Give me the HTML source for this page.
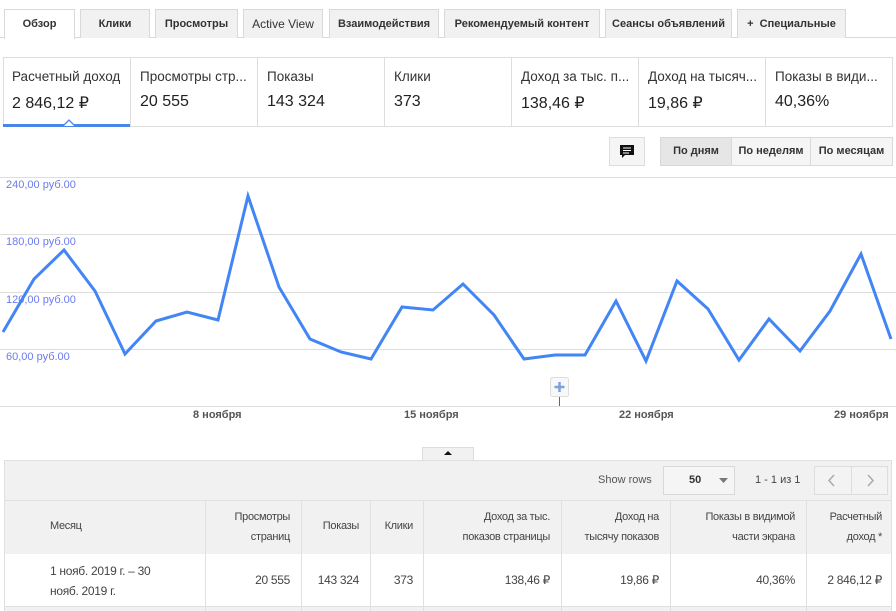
<!DOCTYPE html>
<html><head><meta charset="utf-8"><style>
*{box-sizing:border-box;margin:0;padding:0}
body{width:896px;height:611px;overflow:hidden;background:#fff;font-family:"Liberation Sans",sans-serif;color:#333;position:relative}
.a{position:absolute}
.tab{position:absolute;top:9px;height:29px;background:#f1f1f1;border:1px solid #d9d9d9;border-bottom:none;font-size:11px;font-weight:bold;color:#333;text-align:center;line-height:28px;white-space:nowrap}
.card{position:absolute;top:57px;height:70px;border-left:1px solid #ddd}
.card .l{position:absolute;left:9px;top:12px;font-size:13.5px;color:#333;white-space:nowrap}
.card .v{position:absolute;left:9px;top:36px;font-size:16px;color:#222}
.seg{position:absolute;top:137px;height:29px;border:1px solid #d9d9d9;font-size:11px;font-weight:bold;line-height:27px;text-align:center;background:#f5f5f5}
.gl{position:absolute;left:0;width:896px;height:1px;background:#ddd}
.yl{position:absolute;left:6px;font-size:11px;color:#6b7bf0}
.xl{position:absolute;top:409px;font-size:11px;font-weight:bold;color:#555}
.th,.td{position:absolute;font-size:11px;color:#444;text-align:right;line-height:20px;letter-spacing:-0.3px}
.vb{position:absolute;width:1px;background:#e0e0e0;top:500px;height:111px}
</style></head><body>
<div class="a" style="left:0;top:37px;width:896px;height:1px;background:#d9d9d9"></div>
<div class="tab" style="left:4px;width:71px;background:#fff;height:30px">Обзор</div>
<div class="tab" style="left:80px;width:70px">Клики</div>
<div class="tab" style="left:155px;width:83px">Просмотры</div>
<div class="tab" style="left:243px;width:80px;font-weight:normal;font-size:12px">Active View</div>
<div class="tab" style="left:329px;width:110px">Взаимодействия</div>
<div class="tab" style="left:444px;width:156px">Рекомендуемый контент</div>
<div class="tab" style="left:605px;width:127px">Сеансы объявлений</div>
<div class="tab" style="left:737px;width:109px">+&nbsp; Специальные</div>

<div class="a" style="left:3px;top:57px;width:890px;height:70px;border:1px solid #ddd"></div>
<div class="card" style="left:3px;width:127px;border-left:none"><div class="l">Расчетный доход</div><div class="v">2 846,12 ₽</div></div>
<div class="card" style="left:130px;width:127px"><div class="l">Просмотры стр...</div><div class="v">20 555</div></div>
<div class="card" style="left:257px;width:127px"><div class="l">Показы</div><div class="v">143 324</div></div>
<div class="card" style="left:384px;width:127px"><div class="l">Клики</div><div class="v">373</div></div>
<div class="card" style="left:511px;width:127px"><div class="l">Доход за тыс. п...</div><div class="v">138,46 ₽</div></div>
<div class="card" style="left:638px;width:127px"><div class="l">Доход на тысяч...</div><div class="v">19,86 ₽</div></div>
<div class="card" style="left:765px;width:127px"><div class="l">Показы в види...</div><div class="v">40,36%</div></div>
<div class="a" style="left:3px;top:124px;width:127px;height:3px;background:#4a86e8"></div>
<svg class="a" style="left:62px;top:119px" width="14" height="8"><path d="M1 7 L7 1 L13 7" fill="#fff" stroke="#4a86e8" stroke-width="1.3"/></svg>

<div class="a" style="left:609px;top:137px;width:36px;height:29px;border:1px solid #ddd;background:#f5f5f5"></div>
<svg class="a" style="left:619px;top:144px" width="16" height="16"><path d="M1 1h14v10H6l-3 3v-3H1z" fill="#111"/><path d="M4 4h8M4 6.5h8M4 9h6" stroke="#fff" stroke-width="1"/></svg>
<div class="seg" style="left:660px;width:72px;background:#e6e6e6">По дням</div>
<div class="seg" style="left:731px;width:80px">По неделям</div>
<div class="seg" style="left:810px;width:83px">По месяцам</div>

<div class="gl" style="top:177px"></div><div class="gl" style="top:234px"></div><div class="gl" style="top:292px"></div><div class="gl" style="top:349px"></div><div class="gl" style="top:406px"></div>
<div class="yl" style="top:179px">240,00 руб.00</div>
<div class="yl" style="top:236px">180,00 руб.00</div>
<div class="yl" style="top:294px">120,00 руб.00</div>
<div class="yl" style="top:351px">60,00 руб.00</div>
<svg class="a" style="left:0;top:0" width="896" height="420"><polyline fill="none" stroke="#4285f4" stroke-width="3" stroke-linejoin="miter" points="3,332 34,279 64,250 95,291 125,354 156,321 187,312 218,320 248,196 279,287 310,339 341,352 371,359 402,307 433,310 463,284 494,315 524,359 555,355 585,355 616,301 646,361 677,281 708,309 739,360 769,319 800,351 830,311 861,254 891,339"/>
<rect x="550.5" y="377.5" width="18" height="19" rx="2" fill="#f8f8f8" stroke="#ddd"/><path d="M559.5 382v10M554.5 387h10" stroke="#7aa3dd" stroke-width="2.5"/><path d="M559.5 397v9" stroke="#666"/></svg>
<div class="xl" style="left:193px">8 ноября</div>
<div class="xl" style="left:404px">15 ноября</div>
<div class="xl" style="left:619px">22 ноября</div>
<div class="xl" style="left:834px">29 ноября</div>

<div class="a" style="left:422px;top:447px;width:52px;height:14px;background:#f1f1f1;border:1px solid #ddd;border-bottom:none"></div>
<svg class="a" style="left:444px;top:450px" width="8" height="6"><path d="M0 5L4 1L8 5z" fill="#111"/></svg>
<div class="a" style="left:4px;top:460px;width:888px;height:151px;background:#f1f1f1;border:1px solid #e0e0e0;border-bottom:none"></div>
<div class="a" style="left:598px;top:474px;font-size:11px;color:#555">Show rows</div>
<div class="a" style="left:663px;top:466px;width:72px;height:29px;border:1px solid #d9d9d9;background:#f5f5f5;font-size:11px;font-weight:bold;line-height:27px;padding-left:25px">50</div>
<svg class="a" style="left:719px;top:478px" width="9" height="5"><path d="M0 0h9L4.5 5z" fill="#777"/></svg>
<div class="a" style="left:755px;top:474px;font-size:11px;color:#444">1 - 1 из 1</div>
<div class="a" style="left:814px;top:466px;width:74px;height:29px;border:1px solid #ddd;background:#f3f3f3"></div>
<div class="a" style="left:851px;top:466px;width:1px;height:29px;background:#ddd"></div>
<svg class="a" style="left:814px;top:466px" width="74" height="29"><path d="M20 9l-5 5.5 5 5.5M54 9l5 5.5-5 5.5" fill="none" stroke="#aaa" stroke-width="1.5"/></svg>
<div class="a" style="left:5px;top:500px;width:886px;height:1px;background:#e0e0e0"></div>
<div class="a" style="left:5px;top:554px;width:886px;height:52px;background:#fff"></div>
<div class="a" style="left:5px;top:606px;width:886px;height:1px;background:#e0e0e0"></div>
<div class="vb" style="left:205px"></div><div class="vb" style="left:301px"></div><div class="vb" style="left:370px"></div><div class="vb" style="left:423px"></div><div class="vb" style="left:561px"></div><div class="vb" style="left:670px"></div><div class="vb" style="left:806px"></div>
<div class="th" style="left:50px;top:516px;text-align:left">Месяц</div>
<div class="th" style="right:606px;top:507px">Просмотры<br>страниц</div>
<div class="th" style="right:537px;top:516px">Показы</div>
<div class="th" style="right:483px;top:516px">Клики</div>
<div class="th" style="right:346px;top:507px">Доход за тыс.<br>показов страницы</div>
<div class="th" style="right:237px;top:507px">Доход на<br>тысячу показов</div>
<div class="th" style="right:101px;top:507px">Показы в видимой<br>части экрана</div>
<div class="th" style="right:14px;top:507px">Расчетный<br>доход *</div>
<div class="td" style="left:50px;top:561px;text-align:left;font-size:12px">1 нояб. 2019 г. – 30<br>нояб. 2019 г.</div>
<div class="td" style="right:606px;top:570px;font-size:12px">20 555</div>
<div class="td" style="right:537px;top:570px;font-size:12px">143 324</div>
<div class="td" style="right:483px;top:570px;font-size:12px">373</div>
<div class="td" style="right:346px;top:570px;font-size:12px">138,46 ₽</div>
<div class="td" style="right:237px;top:570px;font-size:12px">19,86 ₽</div>
<div class="td" style="right:101px;top:570px;font-size:12px">40,36%</div>
<div class="td" style="right:14px;top:570px;font-size:12px">2 846,12 ₽</div>
</body></html>
